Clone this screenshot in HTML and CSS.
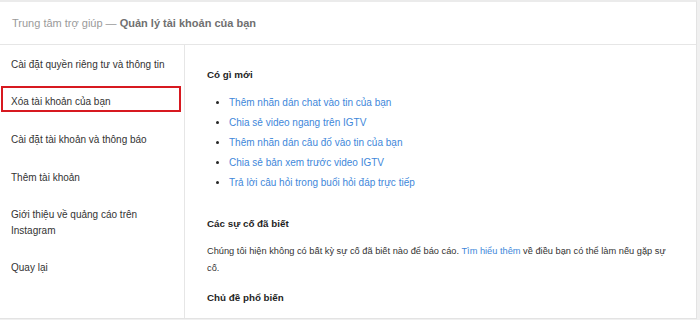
FILE: index.html
```html
<!DOCTYPE html>
<html lang="vi">
<head>
    <meta charset="UTF-8">
    <meta name="viewport" content="width=device-width, initial-scale=1.0">
    <title>Trung tâm trợ giúp</title>
    <link rel="stylesheet" href="styles.css">
</head>
<body>
    <div class="help">
        <div class="help-header">
            Trung tâm trợ giúp —&nbsp;<b>Quản lý tài khoản của bạn</b>
        </div>

        <div class="help-body">
            <div class="sidebar">
                <a class="side-item" href="#">Cài đặt quyền riêng tư và thông tin</a>
                <a class="side-item active" href="#">Xóa tài khoản của bạn</a>
                <a class="side-item" href="#">Cài đặt tài khoản và thông báo</a>
                <a class="side-item" href="#">Thêm tài khoản</a>
                <a class="side-item" href="#">Giới thiệu về quảng cáo trên Instagram</a>
                <a class="side-item" href="#">Quay lại</a>
            </div>

            <div class="content">
                <h2 class="title first">Có gì mới</h2>
                <ul class="news">
                    <li><a href="#">Thêm nhãn dán chat vào tin của bạn</a></li>
                    <li><a href="#">Chia sẻ video ngang trên IGTV</a></li>
                    <li><a href="#">Thêm nhãn dán câu đố vào tin của bạn</a></li>
                    <li><a href="#">Chia sẻ bản xem trước video IGTV</a></li>
                    <li><a href="#">Trả lời câu hỏi trong buổi hỏi đáp trực tiếp</a></li>
                </ul>

                <h2 class="title">Các sự cố đã biết</h2>
                <p class="note">Chúng tôi hiện không có bất kỳ sự cố đã biết nào để báo cáo. <a href="#">Tìm hiểu thêm</a> về điều bạn có thể làm nếu gặp sự cố.</p>

                <h2 class="title last">Chủ đề phổ biến</h2>
            </div>
        </div>
    </div>
</body>
</html>
```

FILE: styles.css
```css
body {
    margin: 0;
    background-color: #f0f0f0;
    font-family: "Liberation Sans", Arial, sans-serif;
    color: #262626;
    overflow: hidden;
  }

  a {
    text-decoration: none;
  }

  .help {
    width: 696px;
    background-color: #fff;
    border-top: 2px solid #ebebeb;
    border-right: 1px solid #e3e3e3;
    border-bottom: 1px solid #e3e3e3;
  }

  .help-header {
    height: 42px;
    display: flex;
    align-items: center;
    padding-left: 12px;
    font-size: 11px;
    color: #9a9a9a;
    border-bottom: 1px solid #e6e6e6;
  }

  .help-header b {
    color: #707070;
    font-weight: 700;
  }

  .help-body {
    display: flex;
    height: 273px;
  }

  .sidebar {
    width: 184px;
    border-right: 1px solid #e6e6e6;
    padding-top: 1px;
    display: flex;
    flex-direction: column;
  }

  .side-item {
    display: block;
    padding: 11px 11px;
    font-size: 10px;
    line-height: 15.5px;
    color: #333;
  }

  .side-item.active {
    margin: 2px 3px 9px 1px;
    padding: 6px 8px 1px 8px;
    border: 2px solid #d71920;
  }

  .content {
    flex: 1;
    padding: 22px 28px 0 22px;
  }

  .title {
    margin: 23px 0 0 0;
    font-size: 9.8px;
    line-height: 16px;
    font-weight: 700;
    color: #1f1f1f;
  }

  .title.first {
    margin-top: 0;
  }

  .title.last {
    margin-top: 13px;
  }

  .news {
    margin: 10px 0 0 0;
    padding-left: 22px;
    font-size: 10px;
    line-height: 20px;
  }

  .news a,
  .note a {
    color: #4187da;
  }

  .note {
    margin: 11px 0 0 0;
    font-size: 9.25px;
    line-height: 17px;
    color: #333;
  }
```
